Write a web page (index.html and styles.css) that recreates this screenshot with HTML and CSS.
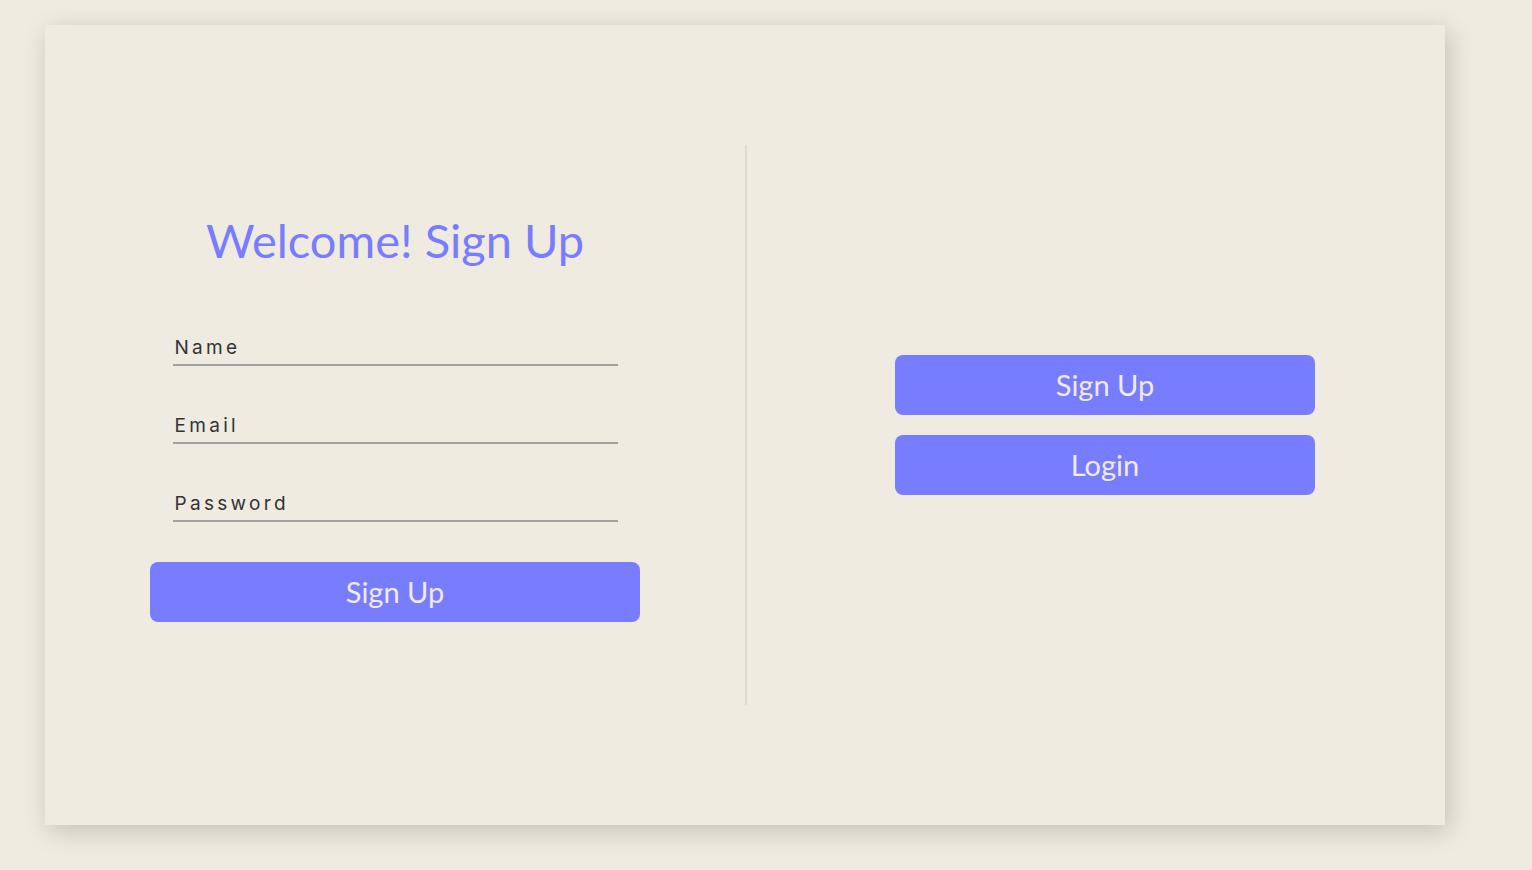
FILE: index.html
```html
<!DOCTYPE html>
<html lang="en">
<head>
<meta charset="utf-8">
<title>Sign Up</title>
<link rel="stylesheet" href="styles.css">
</head>
<body>
<div class="page">
  <div class="card">
    <section class="panel panel-left">
      <h1 class="title">Welcome! Sign Up</h1>
      <form class="form">
        <label class="field"><span class="field-label">Name</span></label>
        <label class="field"><span class="field-label">Email</span></label>
        <label class="field"><span class="field-label">Password</span></label>
        <button type="button" class="btn btn-wide">Sign Up</button>
      </form>
    </section>
    <div class="divider"></div>
    <section class="panel panel-right">
      <button type="button" class="btn btn-side">Sign Up</button>
      <button type="button" class="btn btn-side">Login</button>
    </section>
  </div>
</div>
</body>
</html>
```
FILE: styles.css
```css
html, body {
  margin: 0;
  padding: 0;
  background: #efebe0;
}
.page {
  padding: 25px 0 45px 45px;
}
.card {
  width: 1400px;
  height: 800px;
  background: #efebe0;
  box-shadow: 4px 6px 24px rgba(0, 0, 0, 0.18);
  display: flex;
  align-items: center;
}
.panel {
  box-sizing: border-box;
}
.panel-left {
  width: 700px;
  align-self: stretch;
  padding-top: 186px;
  display: flex;
  flex-direction: column;
  align-items: center;
}
.title {
  margin: 0;
  font-family: "Lato", "Open Sans", sans-serif;
  font-weight: 400;
  font-size: 47px;
  line-height: 59px;
  color: #787cff;
}
.form {
  margin-top: 66px;
  display: flex;
  flex-direction: column;
  align-items: center;
}
.field {
  box-sizing: border-box;
  width: 445px;
  padding: 0 2px 4px;
  border-bottom: 2px solid #a0a0a0;
  margin-bottom: 48px;
  display: block;
}
.field:nth-child(3) {
  margin-bottom: 40px;
}
.field-label {
  font-family: "Inter", "Liberation Sans", sans-serif;
  font-size: 19px;
  line-height: 24px;
  letter-spacing: 3.3px;
  color: #333333;
}
.btn {
  border: none;
  border-radius: 8px;
  background: #787cff;
  color: #efebe0;
  font-family: "Lato", "Open Sans", sans-serif;
  font-size: 29px;
  height: 60px;
  padding: 0 0 2px;
  cursor: pointer;
}
.btn-wide {
  width: 490px;
}
.divider {
  width: 2px;
  height: 560px;
  background: #dedad2;
}
.panel-right {
  flex: 1;
  padding-left: 18px;
  display: flex;
  flex-direction: column;
  align-items: center;
  gap: 20px;
}
.btn-side {
  width: 420px;
}
```
